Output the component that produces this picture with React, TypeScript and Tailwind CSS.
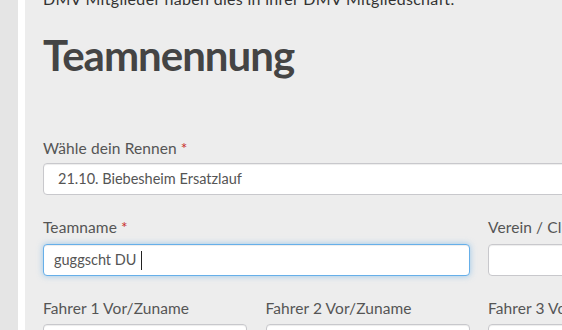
import React from 'react';

const font = "font-['Lato','Liberation_Sans',sans-serif]";

function Label({ text, required }: { text: string; required?: boolean }) {
  return (
    <div className="h-[21px] text-[15.5px] leading-[21px] tracking-[0.1px] text-[#555] whitespace-nowrap">
      {text}
      {required && <span className="text-[#c9302c]"> *</span>}
    </div>
  );
}

function Field({ children, focused }: { children?: React.ReactNode; focused?: boolean }) {
  return (
    <div
      className={`h-[32px] rounded-[4px] bg-white flex items-center px-[10px] text-[14.5px] text-[#555] whitespace-nowrap border ${
        focused
          ? 'border-[#66afe9] shadow-[inset_0_1px_1px_rgba(0,0,0,0.075),0_0_6px_rgba(102,175,233,0.6)]'
          : 'border-[#c8c8cc] shadow-[inset_0_1px_1px_rgba(0,0,0,0.075)]'
      }`}
    >
      {children}
    </div>
  );
}

export default function App() {
  return (
    <div className={`w-[562px] h-[330px] overflow-hidden flex bg-[#ededed] ${font}`}>
      <div className="w-[18px] shrink-0 bg-[#e5e5e5]" />
      <div className="w-[7px] shrink-0 bg-white" />
      <div className="w-[720px] shrink-0 pl-[18px] -mt-[12px]">
        <p className="text-[16px] leading-[21px] tracking-[0.3px] text-[#333] whitespace-nowrap">
          DMV Mitglieder haben dies in ihrer DMV Mitgliedschaft.
        </p>
        <h1 className="mt-[23px] text-[42px] leading-[46px] font-bold tracking-[-1px] text-[#444]">
          Teamnennung
        </h1>

        <div className="mt-[60px]">
          <Label text="Wähle dein Rennen" required />
          <div className="mt-[4px] w-[680px]">
            <Field>
              <span className="pl-[4px]">21.10. Biebesheim Ersatzlauf</span>
            </Field>
          </div>
        </div>

        <div className="mt-[22px] grid grid-cols-[204px_204px_204px] gap-x-[18.5px]">
          <div className="col-span-2">
            <Label text="Teamname" required />
            <div className="mt-[6px]">
              <Field focused>
                <span>guggscht DU</span>
                <span className="ml-[5px] inline-block w-px h-[19px] bg-[#222]" />
              </Field>
            </div>
          </div>
          <div>
            <Label text="Verein / Club" />
            <div className="mt-[6px]">
              <Field />
            </div>
          </div>
        </div>

        <div className="mt-[22px] grid grid-cols-[204px_204px_204px] gap-x-[18.5px]">
          {['Fahrer 1 Vor/Zuname', 'Fahrer 2 Vor/Zuname', 'Fahrer 3 Vor/Zuname'].map((t) => (
            <div key={t}>
              <Label text={t} />
              <div className="mt-[5px]">
                <Field />
              </div>
            </div>
          ))}
        </div>
      </div>
    </div>
  );
}
